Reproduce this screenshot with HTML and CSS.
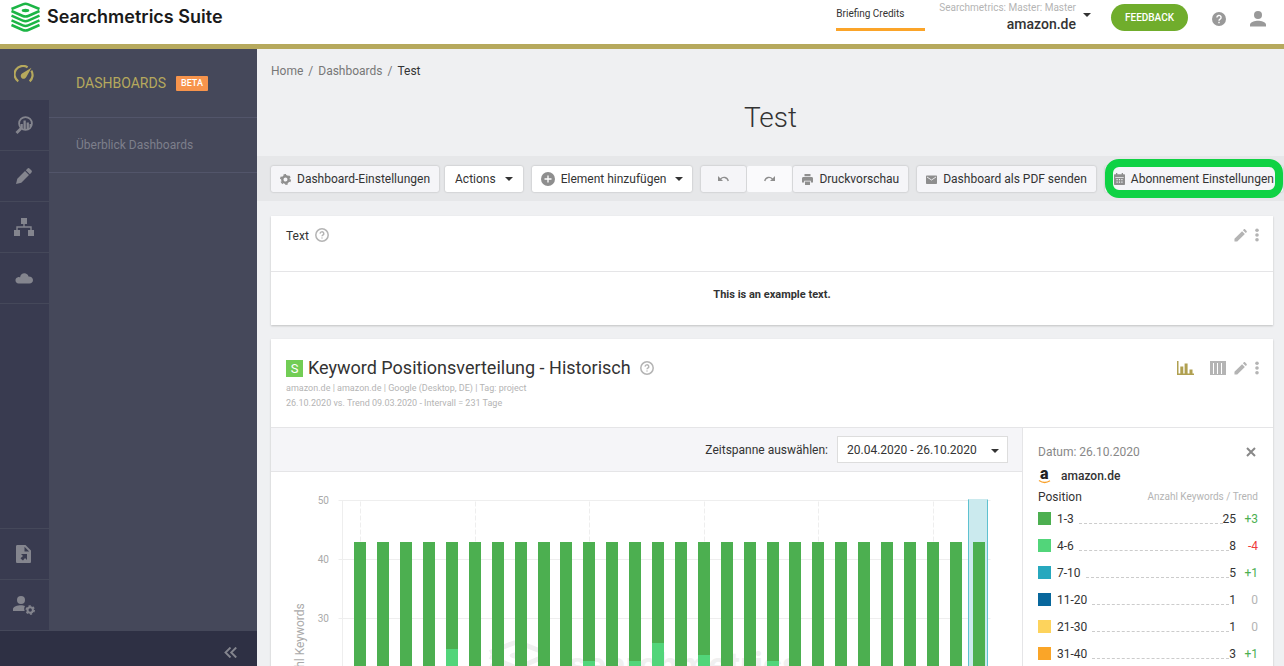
FILE: index.html
```html
<!DOCTYPE html>
<html lang="de">
<head>
    <meta charset="UTF-8">
    <meta name="viewport" content="width=device-width, initial-scale=1">
    <title>Test - Searchmetrics Suite</title>
    <link rel="stylesheet" href="styles.css">
</head>
<body>

<svg class="defs" aria-hidden="true">
    <symbol id="i-help" viewBox="0 0 14 14">
        <circle cx="7" cy="7" r="6.2" fill="none" stroke="currentColor" stroke-width="1.5"/>
        <path d="M5.2 5.6a1.8 1.7 0 1 1 2.7 1.4c-.6.4-.9.7-.9 1.3M7 9.4v1.2" fill="none" stroke="currentColor" stroke-width="1.5"/>
    </symbol>
    <symbol id="i-pencil" viewBox="0 0 14 14">
        <path d="M0.5 13.5v-3L8.7 2.3l3 3L3.5 13.5zM9.6 1.4l1-1c.4-.4.9-.4 1.3 0l1.7 1.7c.4.4.4.9 0 1.3l-1 1z" fill="currentColor"/>
    </symbol>
    <symbol id="i-dots" viewBox="0 0 4 14">
        <g fill="currentColor"><circle cx="2" cy="2.2" r="1.8"/><circle cx="2" cy="7" r="1.8"/><circle cx="2" cy="11.8" r="1.8"/></g>
    </symbol>
    <symbol id="i-logo" viewBox="0 0 29 29">
        <g fill="none" stroke="currentColor" stroke-width="2.5">
            <path d="M.5 6.500 11.800 1.900Q14.500.8 17.200 1.900L28.500 6.500"/>
            <path d="M.5 8.500l11.300 5q2.700 1.200 5.400 0l11.300-5M.5 13.200l11.300 5q2.700 1.200 5.400 0l11.300-5M.5 17.900l11.300 5q2.700 1.200 5.400 0l11.300-5M.5 22.500l11.300 5q2.700 1.200 5.400 0l11.300-5"/>
        </g>
        <ellipse cx="14.500" cy="8" rx="3.800" ry="1.700" fill="currentColor"/>
    </symbol>
</svg>

<header class="topbar">
    <a class="brand" href="#">
        <svg class="brand-logo"><use href="#i-logo"/></svg>
        <span>Searchmetrics Suite</span>
    </a>
    <a class="credits" href="#">Briefing Credits</a>
    <button class="account" type="button">
        <span class="account-text">
            <span class="account-name">Searchmetrics: Master: Master</span>
            <span class="account-domain">amazon.de</span>
        </span>
        <span class="caret"></span>
    </button>
    <button class="feedback" type="button">FEEDBACK</button>
    <button class="top-icon" type="button" aria-label="Hilfe">
        <svg width="14" height="14" viewBox="0 0 14 14"><circle cx="7" cy="7" r="7" fill="currentColor"/><path d="M4.9 5.5a2.1 2 0 1 1 3.2 1.6C7.4 7.6 7 7.9 7 8.7M7 9.8v1.5" fill="none" stroke="#fff" stroke-width="1.4"/></svg>
    </button>
    <button class="top-icon" type="button" aria-label="Profil">
        <svg width="16" height="16" viewBox="0 0 16 16" fill="currentColor"><circle cx="8" cy="4" r="4"/><path d="M0 15.5v-2C0 11 5 9.7 8 9.7s8 1.300 8 3.800v2z"/></svg>
    </button>
</header>

<div class="layout">
    <aside class="sidebar">
        <div class="sidebar-body">
            <nav class="rail">
                <a class="rail-item active" href="#" aria-label="Dashboards">
                    <svg width="20" height="18" viewBox="0 0 20 18"><path d="M4.300 16.300A8.300 8.300 0 0 1 13.600 2.300M17.300 5.600a8.300 8.300 0 0 1-1.600 10.700" fill="none" stroke="currentColor" stroke-width="2.200"/><path d="M17.500 2.700 12.300 12a2.900 2.900 0 1 1-4.300-3.500z" fill="currentColor"/></svg>
                </a>
                <a class="rail-item" href="#" aria-label="Research">
                    <svg width="18" height="18" viewBox="0 0 18 18"><circle cx="10.500" cy="7.500" r="6.400" fill="none" stroke="currentColor" stroke-width="1.800"/><path d="M6 12.500 1.500 17" stroke="currentColor" stroke-width="2.800"/><path d="M5.500 8h2.300v5H5.500zM8.500 4.500h2.300V14H8.500zM11.600 6.500h2.300v6.800h-2.300zM14.500 8h1.500v3h-1.500z" fill="currentColor"/></svg>
                </a>
                <a class="rail-item" href="#" aria-label="Content">
                    <svg width="16" height="16" viewBox="0 0 16 16" fill="currentColor"><path d="M0 16l1.300-5.300L9 3l4 4-7.700 7.700zM9.800 2.200 11.300.7c.8-.8 1.600-.8 2.400 0l1.600 1.600c.8.8.8 1.600 0 2.400l-1.500 1.500z"/></svg>
                </a>
                <a class="rail-item" href="#" aria-label="Struktur">
                    <svg width="20" height="18" viewBox="0 0 20 18" fill="currentColor"><path d="M7 0h6v6h-2.300v2.300H17.700V12H20v6h-6v-6h2.300V9.700H3.700V12H6v6H0v-6h2.300V8.300h7V6H7z"/></svg>
                </a>
                <a class="rail-item" href="#" aria-label="Cloud">
                    <svg width="18" height="11" viewBox="0 0 18 11" fill="currentColor"><path d="M3.500 10.500a3.200 3.200 0 0 1-.6-6.300c1-.2 1.500 0 2.100.2C5.500 1.500 7.300.3 9.300.3c2.200 0 3.700 1.300 4.200 3.100 2.700-.1 4.500 1.500 4.500 3.700 0 2.100-1.500 3.400-3.500 3.400z"/></svg>
                </a>
                <div class="rail-bottom">
                    <a class="rail-item" href="#" aria-label="Berichte">
                        <svg width="15" height="18" viewBox="0 0 15 18"><path fill="currentColor" fill-rule="evenodd" d="M1.500 0H9.500L15 5.500v11c0 1-.5 1.500-1.500 1.500h-12C.5 18 0 17.500 0 16.500v-15C0 .5.500 0 1.500 0zM8.500 1.800V6.500h4.700zM5 9h6v6L9 13l-2 2.500-1.300-1L4.500 13.300 7 11z"/></svg>
                    </a>
                    <a class="rail-item" href="#" aria-label="Verwaltung">
                        <svg width="22" height="19" viewBox="0 0 22 19"><g fill="currentColor"><circle cx="8" cy="4" r="4"/><path d="M0 15v-2c0-2.300 4.500-3.700 8-3.700 1.500 0 3 .3 4 .7-1 1.500-1 3.500-.3 5z"/></g><circle cx="17.200" cy="14" r="2.700" fill="none" stroke="currentColor" stroke-width="2"/><circle cx="17.200" cy="14" r="4" fill="none" stroke="currentColor" stroke-width="1.500" stroke-dasharray="2.200 1.990"/></svg>
                    </a>
                </div>
            </nav>
            <nav class="submenu">
                <div class="submenu-title">DASHBOARDS <span class="beta">BETA</span></div>
                <a class="submenu-item" href="#">Überblick Dashboards</a>
            </nav>
        </div>
        <button class="collapse" type="button" aria-label="Menü einklappen">
            <svg width="13" height="11" viewBox="0 0 13 11"><path d="M6.500.5l-5 5 5 5M12.200.5l-5 5 5 5" fill="none" stroke="currentColor" stroke-width="1.900"/></svg>
        </button>
    </aside>

    <main class="content">
        <nav class="breadcrumb">
            <a href="#">Home</a><span>/</span><a href="#">Dashboards</a><span>/</span><b>Test</b>
        </nav>
        <h1>Test</h1>

        <div class="toolbar">
            <button class="btn muted" type="button">
                <svg width="11" height="11" viewBox="0 0 11 11"><circle cx="5.500" cy="5.500" r="3.200" fill="none" stroke="currentColor" stroke-width="2.400"/><circle cx="5.500" cy="5.500" r="4.700" fill="none" stroke="currentColor" stroke-width="1.600" stroke-dasharray="2.460 2.460"/></svg>
                Dashboard-Einstellungen
            </button>
            <button class="btn actions" type="button">Actions <span class="caret"></span></button>
            <button class="btn" type="button">
                <svg width="14" height="14" viewBox="0 0 14 14"><circle cx="7" cy="7" r="7" fill="currentColor"/><path d="M7 3.500v7M3.500 7h7" stroke="#fff" stroke-width="1.300"/></svg>
                Element hinzufügen <span class="caret"></span>
            </button>
            <div class="group">
                <button class="btn muted icon-only" type="button" aria-label="Rückgängig">
                    <svg width="11" height="6" viewBox="0 0 11 6"><path d="M0 0v5h5z" fill="currentColor"/><path d="M2.500 3C5 .5 9.200.8 10.300 5" fill="none" stroke="currentColor" stroke-width="1.300"/></svg>
                </button>
                <button class="btn muted icon-only flat" type="button" aria-label="Wiederholen">
                    <svg width="11" height="6" viewBox="0 0 11 6"><path d="M11 0v5H6z" fill="currentColor"/><path d="M8.500 3C6 .5 1.800.8.7 5" fill="none" stroke="currentColor" stroke-width="1.300"/></svg>
                </button>
                <button class="btn muted" type="button">
                    <svg width="11" height="11" viewBox="0 0 11 11"><path fill="currentColor" d="M2.500 0h6v2.300h-6zM1.500 3h8c1 0 1.500.6 1.500 1.500v4H8.800V6.700H2.200v1.800H0v-4C0 3.600.5 3 1.500 3zM3 7.500h5V11H3z"/></svg>
                    Druckvorschau
                </button>
            </div>
            <button class="btn muted" type="button">
                <svg width="11" height="11" viewBox="0 0 11 11"><path d="M1 1.500h9c.6 0 1 .4 1 1v6.500c0 .6-.4 1-1 1H1c-.6 0-1-.4-1-1V2.500c0-.6.4-1 1-1z" fill="currentColor"/><path d="M1 3l4.500 3L10 3" fill="none" stroke="#f5f5f8" stroke-width=".9"/></svg>
                Dashboard als PDF senden
            </button>
            <div class="highlight">
                <button class="btn muted" type="button">
                    <svg width="11" height="12" viewBox="0 0 11 12"><path fill="currentColor" fill-rule="evenodd" d="M2 0h1.300v1.200h4.400V0H9v1.200h1c.6 0 1 .4 1 1V11c0 .6-.4 1-1 1H1c-.6 0-1-.4-1-1V2.200c0-.6.4-1 1-1h1zM1.300 4v.8h8.400V4zM2.500 6v1.300h1.200V6zm2.400 0v1.300h1.200V6zm2.400 0v1.300h1.200V6zM2.500 8.500v1.300h1.200V8.500zm2.400 0v1.300h1.200V8.500zm2.400 0v1.300h1.200V8.500z"/></svg>
                    Abonnement Einstellungen
                </button>
            </div>
        </div>

        <section class="card">
            <div class="card-head small">
                <h2 class="card-title">Text</h2>
                <svg class="help"><use href="#i-help"/></svg>
                <div class="card-tools">
                    <button type="button" aria-label="Bearbeiten"><svg width="13" height="13"><use href="#i-pencil"/></svg></button>
                    <button type="button" aria-label="Mehr"><svg width="4" height="14"><use href="#i-dots"/></svg></button>
                </div>
            </div>
            <p class="card-text">This is an example text.</p>
        </section>

        <section class="card">
            <div class="card-head">
                <div>
                    <div class="title-row">
                        <span class="badge-s">S</span>
                        <h2 class="card-title big">Keyword Positionsverteilung - Historisch</h2>
                        <svg class="help"><use href="#i-help"/></svg>
                    </div>
                    <p class="meta">amazon.de | amazon.de | Google (Desktop, DE) | Tag: project</p>
                    <p class="meta">26.10.2020 vs. Trend 09.03.2020 - Intervall = 231 Tage</p>
                </div>
                <div class="card-tools">
                    <button class="view chosen" type="button" aria-label="Diagramm"><svg width="17" height="14" viewBox="0 0 17 14"><path d="M0 0h1.500v12.500H17V14H0zM3.300 5.500h3v7h-3zM7.600 2.500h3v10h-3zM12.500 8.500h3v4h-3z" fill="currentColor"/></svg></button>
                    <button class="view" type="button" aria-label="Tabelle"><svg width="16" height="14" viewBox="0 0 16 14"><path d="M0 0h16v14H0z" fill="currentColor"/><path d="M3.500 2v11M7.500 2v11M11.500 2v11" stroke="#fff" stroke-width="1"/></svg></button>
                    <button type="button" aria-label="Bearbeiten"><svg width="13" height="13"><use href="#i-pencil"/></svg></button>
                    <button type="button" aria-label="Mehr"><svg width="4" height="14"><use href="#i-dots"/></svg></button>
                </div>
            </div>
            <div class="card-body">
                <div class="chart-side">
                    <div class="range">
                        <label for="range">Zeitspanne auswählen:</label>
                        <span class="select">
                            <select id="range"><option>20.04.2020 - 26.10.2020</option></select>
                            <span class="caret"></span>
                        </span>
                    </div>
                    <svg class="chart" id="chart" width="750" height="400" role="img" aria-label="Anzahl Keywords">
                        <g id="grid"></g>
                        <g class="watermark">
                            <use href="#i-logo" x="218" y="168" width="56" height="56"/>
                            <text x="297" y="204">searchmetrics</text>
                        </g>
                        <g id="bars"></g>
                        <text class="axis-title" transform="translate(33 177) rotate(-90)">Anzahl Keywords</text>
                    </svg>
                </div>
                <div class="legend">
                    <div class="legend-head">
                        <span>Datum: 26.10.2020</span>
                        <button type="button" aria-label="Schließen"><svg width="10" height="10" viewBox="0 0 10 10"><path d="M1 1l8 8M9 1 1 9" stroke="currentColor" stroke-width="2"/></svg></button>
                    </div>
                    <div class="legend-domain">
                        <svg width="13" height="15" viewBox="0 0 13 15"><text class="amazon-a" x="2" y="10">a</text><path d="M1 11.500q5.500 3.800 11 .3" fill="none" stroke="#f9a12b" stroke-width="1.300"/></svg>
                        amazon.de
                    </div>
                    <table>
                        <thead>
                            <tr><th class="pos">Position</th><th class="sub" colspan="2">Anzahl Keywords / Trend</th></tr>
                        </thead>
                        <tbody>
                            <tr><td class="pos"><i class="swatch c1"></i>1-3<i class="leader"></i></td><td>25</td><td class="trend up">+3</td></tr>
                            <tr><td class="pos"><i class="swatch c2"></i>4-6<i class="leader"></i></td><td>8</td><td class="trend down">-4</td></tr>
                            <tr><td class="pos"><i class="swatch c3"></i>7-10<i class="leader"></i></td><td>5</td><td class="trend up">+1</td></tr>
                            <tr><td class="pos"><i class="swatch c4"></i>11-20<i class="leader"></i></td><td>1</td><td class="trend">0</td></tr>
                            <tr><td class="pos"><i class="swatch c5"></i>21-30<i class="leader"></i></td><td>1</td><td class="trend">0</td></tr>
                            <tr><td class="pos"><i class="swatch c6"></i>31-40<i class="leader"></i></td><td>3</td><td class="trend up">+1</td></tr>
                        </tbody>
                    </table>
                </div>
            </div>
        </section>
    </main>
</div>

<script>
    // upper edge of the second segment (positions 4-6) per week
    var second=[18,18,19,19,25,20,18,17,18,19,23,20,23,26,20,24,19,18,23,20,19,19,18,18,19,20,19,18];
    var left=71,right=719,top0=29,unit=5.92,step=648/28.3;
    var grid=document.getElementById("grid");
    var bars=document.getElementById("bars");

    function add(parent,name,attrs,text){
        var el=document.createElementNS("http://www.w3.org/2000/svg",name);
        for(var key in attrs) el.setAttribute(key,attrs[key]);
        if(text) el.textContent=text;
        parent.appendChild(el);
    }
    function yOf(value){
        return Math.round(top0+(50-value)*unit);
    }
    function line(x1,y1,x2,y2,cls){
        add(grid,"line",{x1:x1+0.5,y1:y1+0.5,x2:x2+0.5,y2:y2+0.5,"class":cls});
    }

    for(var v=50;v>=0;v-=10){
        line(left-4,yOf(v)-1,right,yOf(v)-1,"grid-line");
        add(grid,"text",{x:left-13,y:yOf(v)+3,"class":"tick"},String(v));
    }
    line(left,top0-1,left,yOf(0),"grid-line");

    for(var i=0;i<second.length;i++){
        var x=Math.round(83.4+i*step);
        if(i%5===0) line(x+6,top0,x+6,yOf(0),"grid-dash");
        add(bars,"rect",{x:x,y:yOf(43),width:12,height:yOf(second[i])-yOf(43),"class":"c1"});
        add(bars,"rect",{x:x,y:yOf(second[i]),width:12,height:yOf(10)-yOf(second[i]),"class":"c2"});
        add(bars,"rect",{x:x,y:yOf(10),width:12,height:yOf(0)-yOf(10),"class":"c3"});
    }
    add(grid,"rect",{x:697,y:top0-2,width:19,height:yOf(0)-top0,"class":"current"});
    line(697,top0-2,697,yOf(0),"current-edge");
    line(716,top0-2,716,yOf(0),"current-edge");
</script>
</body>
</html>
```

FILE: styles.css
```css
*,*::after{box-sizing:border-box;padding:0;margin:0;}
body{height:100vh;display:flex;flex-direction:column;overflow:hidden;font-family:Roboto,"Liberation Sans",sans-serif;font-size:12px;line-height:16px;color:#333;background:#eff0f2;}
a{color:inherit;text-decoration:none;}
button{font:inherit;color:inherit;border:0;background:none;cursor:pointer;}
svg{display:block;flex:none;}
.defs{position:absolute;width:0;height:0;}
.caret{flex:none;border:4px solid transparent;border-top-color:#333;border-bottom:0;}

/* top bar */
.topbar{flex:none;display:flex;align-items:flex-start;height:49px;padding:0 18px 0 11px;background:#fff;border-bottom:5px solid #b6a95d;}
.brand{display:flex;align-items:center;gap:7px;padding-top:2px;margin-right:auto;font-family:Inter,sans-serif;font-weight:600;font-size:18px;color:#1a1a1a;}
.brand-logo{width:29px;height:30px;color:#1cb545;}
.credits{width:89px;height:31px;padding-top:6px;font-size:10px;border-bottom:3px solid #fba429;margin-right:14px;}
.account{display:flex;align-items:flex-start;gap:7px;text-align:right;margin-right:20px;}
.account .caret{margin-top:13px;}
.account-text{display:flex;flex-direction:column;}
.account-name{font-size:10px;color:#b4b4b4;}
.account-domain{font-size:14px;font-weight:500;}
.feedback{width:77px;height:27px;margin-top:4px;border-radius:14px;background:#70ad2c;color:#fff;font-size:10px;font-weight:500;}
.top-icon{display:flex;align-items:center;height:38px;margin-left:24px;color:#999;}

/* sidebar */
.layout{flex:1;display:flex;min-height:0;}
.sidebar{flex:none;width:257px;display:flex;flex-direction:column;background:#45485a;}
.sidebar-body{flex:1;display:flex;min-height:0;}
.rail{width:49px;display:flex;flex-direction:column;background:#393b50;}
.rail-item{flex:none;height:51px;display:flex;align-items:center;justify-content:center;padding-right:2px;color:#84858e;border-bottom:1px solid #45485a;}
.rail-item.active{color:#b6a95d;background:#45485a;}
.rail-bottom{margin-top:auto;border-top:1px solid #45485a;}
.submenu{flex:1;}
.submenu-title{display:flex;align-items:center;gap:10px;height:69px;padding-left:27px;font-size:14px;color:#b6a95d;border-bottom:1px solid #52556a;}
.beta{height:15px;padding:0 5px;border-radius:1px;background:#f7944c;color:#fff;font-size:9px;font-weight:500;line-height:15px;}
.submenu-item{display:flex;align-items:center;height:55px;padding-left:27px;color:#7d7f8b;border-bottom:1px solid #52556a;}
.collapse{flex:none;height:35px;display:flex;align-items:center;justify-content:flex-end;padding:8px 20px 0 0;background:#2e3044;color:#84858e;}

/* content */
.content{flex:1;min-width:0;overflow:hidden;}
.breadcrumb{display:flex;gap:5px;padding:14px 14px 0;color:#777;}
.breadcrumb b{font-weight:400;color:#333;}
h1{padding:21px 0;font-size:28px;font-weight:300;line-height:35px;text-align:center;}
.toolbar{display:flex;height:45px;padding:10px 0 9px 14px;background:#e6e7e9;white-space:nowrap;}
.btn{display:flex;flex:none;align-items:center;gap:6px;height:26px;padding:0 9px;margin-right:9px;background:#fff;border-radius:2px;box-shadow:0 0 2px rgba(0,0,0,.25);}
.btn svg{color:#8e8e8e;}
.btn .caret{margin-left:3px;}
.btn.actions{padding:0 10px;}
.muted{background:#f5f5f8;}
.muted:first-child{margin-right:6px;}
.group{display:flex;gap:1px;margin-right:9px;}
.group .btn{margin-right:0;}
.icon-only{width:45px;justify-content:center;}
.icon-only.flat{background:#fafafc;box-shadow:none;}
.highlight{position:relative;}
.highlight::after{content:"";position:absolute;top:-7px;left:0;width:178px;height:39px;border:8px solid #0fd244;border-radius:14px;pointer-events:none;}

/* cards */
.card{margin:15px 11px 14px 14px;background:#fff;box-shadow:0 1px 2px rgba(0,0,0,.2);}
.card + .card{margin-top:0;}
.card-head{display:flex;align-items:flex-start;height:89px;padding:19px 14px 0 15px;border-bottom:1px solid #e5e5e7;}
.card-head.small{height:56px;padding-top:12px;}
.card-title{font-size:12px;font-weight:400;line-height:16px;}
.card-title.big{font-size:18px;line-height:20px;}
.help{width:14px;height:14px;color:#b4b4b4;}
.small .help{margin-left:6px;}
.title-row{display:flex;align-items:center;gap:5px;margin-bottom:3px;}
.title-row .help{margin-left:4px;}
.badge-s{width:17px;height:17px;background:#72cd55;color:#fff;font-size:13px;line-height:17px;text-align:center;}
.meta{font-size:9px;line-height:15px;color:#b4b4b4;}
.card-tools{display:flex;align-items:center;gap:8px;margin-left:auto;height:20px;color:#b4b4b4;}
.small .card-tools{height:14px;}
.view{margin-right:8px;}
.view + .view{margin-right:0;}
.chosen{color:#b0a050;}
.card-text{padding:15px 0 22px;font-size:11px;font-weight:700;text-align:center;}
.card-body{display:flex;}
.chart-side{flex:1;min-width:0;overflow:hidden;}
.range{display:flex;align-items:center;justify-content:flex-end;gap:9px;height:44px;padding-right:14px;background:#f5f5f8;border-bottom:1px solid #e5e5e7;}
.select{position:relative;}
.select .caret{position:absolute;right:9px;top:13px;pointer-events:none;}
select{appearance:none;display:block;width:171px;height:27px;padding:0 9px;font:inherit;color:#333;background:#fff;border:1px solid #ddd;border-radius:0;}

/* chart */
.grid-line{stroke:#eee;}
.grid-dash{stroke:#eee;stroke-dasharray:5 2;}
.tick{font-size:10px;fill:#aaa;text-anchor:end;}
.axis-title{font-size:12px;fill:#aaa;text-anchor:middle;}
.watermark{color:#f0f0f0;fill:#f0f0f0;font-family:Inter,sans-serif;font-size:33px;font-weight:700;}
.current{fill:#cbeaee;}
.current-edge{stroke:#5ec1d0;}
.c1{fill:#4caf50;background:#4caf50;}
.c2{fill:#52d57a;background:#52d57a;}
.c3{fill:#27a8be;background:#27a8be;}
.c4{background:#08679c;}
.c5{background:#fdd35c;}
.c6{background:#faa528;}

/* legend */
.legend{flex:none;width:251px;padding:16px 15px;border-left:1px solid #e5e5e7;}
.legend-head{display:flex;align-items:center;justify-content:space-between;padding-right:2px;color:#888;}
.legend-domain{display:flex;align-items:center;gap:10px;height:32px;font-weight:500;}
.amazon-a{font-size:16px;font-weight:900;fill:#222;}
table,thead,tbody{display:block;}
tr{display:flex;align-items:center;height:27px;}
thead tr{height:10px;margin-bottom:3px;}
th{font-weight:400;}
.sub{font-size:10px;color:#b4b4b4;}
.pos{flex:1;display:flex;align-items:center;}
.swatch{width:13px;height:13px;margin-right:6px;}
.leader{flex:1;height:10px;margin-left:5px;border-bottom:1px dashed #ccc;}
.trend{width:22px;text-align:right;color:#b4b4b4;}
.up{color:#4caf50;}
.down{color:#f03c3c;}
```
